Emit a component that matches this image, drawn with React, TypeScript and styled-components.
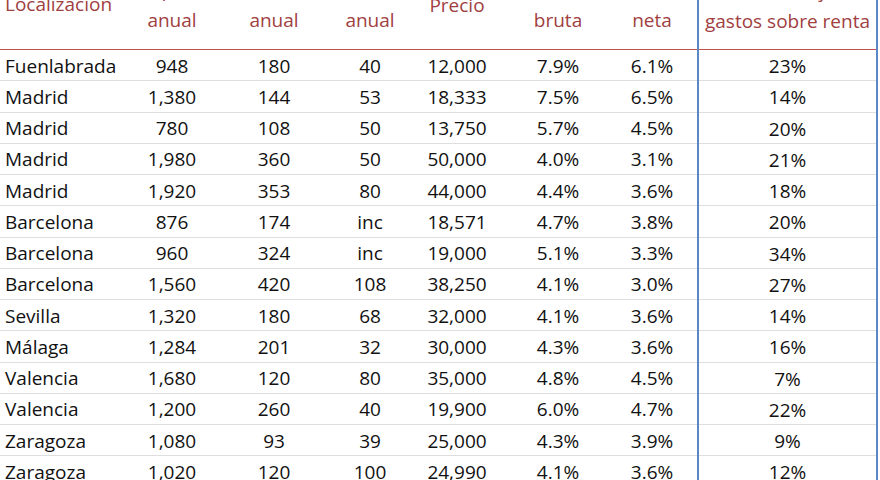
import React from "react";
import styled, { createGlobalStyle } from "styled-components";

const Global = createGlobalStyle`
  html, body { margin: 0; padding: 0; background: #ffffff; }
  body { font-family: "Open Sans", "Noto Sans", sans-serif; overflow: hidden; }
`;

const COLS = "121px 102px 102px 90px 84px 118px 80px 181px";

const Table = styled.div`
  width: 878px;
  margin-top: -30px;
  display: flex;
  flex-direction: column;
`;

const HeaderRow = styled.div`
  display: grid;
  grid-template-columns: ${COLS};
  height: 80px;
  box-sizing: border-box;
  border-bottom: 1px solid #c0504d;
`;

const HeaderCell = styled.div<{ $align?: string; $pb: number; $pr?: number; $boxed?: boolean }>`
  display: flex;
  flex-direction: column;
  justify-content: flex-end;
  align-items: ${(p) => (p.$align === "left" ? "flex-start" : "center")};
  padding: 0 ${(p) => p.$pr ?? 0}px ${(p) => p.$pb}px ${(p) => (p.$align === "left" ? 5 : 0)}px;
  box-sizing: border-box;
  color: #a0403f;
  font-size: 19px;
  line-height: 30px;
  white-space: nowrap;
  ${(p) => (p.$boxed ? "border-left: 2px solid #5b87c5; border-right: 2px solid #5b87c5; margin-bottom: -1px;" : "")}
`;

const DataRow = styled.div`
  display: grid;
  grid-template-columns: ${COLS};
  height: 31.25px;
  box-sizing: border-box;
  border-bottom: 1px solid #dedede;
`;

const Cell = styled.div<{ $align?: string; $pr?: number; $boxed?: boolean }>`
  display: flex;
  align-items: center;
  justify-content: ${(p) => (p.$align === "left" ? "flex-start" : "center")};
  padding: 1px ${(p) => p.$pr ?? 0}px 0 ${(p) => (p.$align === "left" ? 5 : 0)}px;
  box-sizing: border-box;
  color: #111111;
  font-size: 19px;
  white-space: nowrap;
  ${(p) => (p.$boxed ? "border-left: 2px solid #5b87c5; border-right: 2px solid #5b87c5; margin-bottom: -1px;" : "")}
`;

type Row = [string, string, string, string, string, string, string, string];

const rows: Row[] = [
  ["Fuenlabrada", "948", "180", "40", "12,000", "7.9%", "6.1%", "23%"],
  ["Madrid", "1,380", "144", "53", "18,333", "7.5%", "6.5%", "14%"],
  ["Madrid", "780", "108", "50", "13,750", "5.7%", "4.5%", "20%"],
  ["Madrid", "1,980", "360", "50", "50,000", "4.0%", "3.1%", "21%"],
  ["Madrid", "1,920", "353", "80", "44,000", "4.4%", "3.6%", "18%"],
  ["Barcelona", "876", "174", "inc", "18,571", "4.7%", "3.8%", "20%"],
  ["Barcelona", "960", "324", "inc", "19,000", "5.1%", "3.3%", "34%"],
  ["Barcelona", "1,560", "420", "108", "38,250", "4.1%", "3.0%", "27%"],
  ["Sevilla", "1,320", "180", "68", "32,000", "4.1%", "3.6%", "14%"],
  ["Málaga", "1,284", "201", "32", "30,000", "4.3%", "3.6%", "16%"],
  ["Valencia", "1,680", "120", "80", "35,000", "4.8%", "4.5%", "7%"],
  ["Valencia", "1,200", "260", "40", "19,900", "6.0%", "4.7%", "22%"],
  ["Zaragoza", "1,080", "93", "39", "25,000", "4.3%", "3.9%", "9%"],
  ["Zaragoza", "1,020", "120", "100", "24,990", "4.1%", "3.6%", "12%"],
];

const headers: { lines: string[]; align?: string; pb: number; pr?: number; boxed?: boolean }[] = [
  { lines: ["Localización"], align: "left", pb: 30 },
  { lines: ["Alquiler", "anual"], pb: 14 },
  { lines: ["Gastos", "anual"], pb: 14 },
  { lines: ["Comunidad", "anual"], pb: 14 },
  { lines: ["Precio"], pb: 29 },
  { lines: ["Rentab.", "bruta"], pb: 14 },
  { lines: ["Rentab.", "neta"], pb: 14, pr: 10 },
  { lines: ["Porcentaje", "gastos sobre renta"], pb: 14, boxed: true },
];

export default function App() {
  return (
    <>
      <Global />
      <Table>
        <HeaderRow>
          {headers.map((h, i) => (
            <HeaderCell key={i} $align={h.align} $pb={h.pb} $pr={h.pr} $boxed={h.boxed}>
              {h.lines.map((l, j) => (
                <span key={j}>{l}</span>
              ))}
            </HeaderCell>
          ))}
        </HeaderRow>
        {rows.map((r, i) => (
          <DataRow key={i}>
            {r.map((v, j) => (
              <Cell
                key={j}
                $align={j === 0 ? "left" : "center"}
                $pr={j === 6 ? 10 : 0}
                $boxed={j === 7}
              >
                {v}
              </Cell>
            ))}
          </DataRow>
        ))}
      </Table>
    </>
  );
}
